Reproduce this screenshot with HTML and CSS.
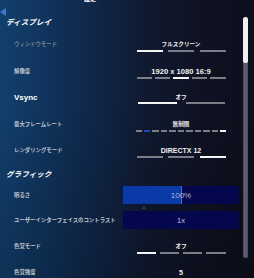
FILE: index.html
```html
<!DOCTYPE html>
<html lang="ja">
<head>
<meta charset="utf-8">
<title>設定</title>
<link rel="stylesheet" href="styles.css">
</head>
<body>
<div class="screen">
  <div class="main">
    <div class="topbar"><span class="tab">設定</span></div>
    <span class="back"></span>

    <section class="section">
      <h2 class="heading">ディスプレイ</h2>
      <div class="row">
        <span class="label label--dim">ウィンドウモード</span>
        <div class="control">
          <span class="value">フルスクリーン</span>
          <div class="bars bars--3"><span class="on"></span><span></span><span></span></div>
        </div>
      </div>
      <div class="row">
        <span class="label">解像度</span>
        <div class="control">
          <span class="value value--latin">1920 x 1080 16:9</span>
          <div class="bars bars--5"><span></span><span></span><span class="on"></span><span></span><span></span></div>
        </div>
      </div>
      <div class="row">
        <span class="label label--large">Vsync</span>
        <div class="control">
          <span class="value">オフ</span>
          <div class="bars bars--2"><span class="on"></span><span></span></div>
        </div>
      </div>
      <div class="row">
        <span class="label">最大フレームレート</span>
        <div class="control">
          <span class="value">無制限</span>
          <div class="bars bars--11"><span></span><span class="blue"></span><span></span><span></span><span></span><span></span><span></span><span></span><span></span><span></span><span class="on"></span></div>
        </div>
      </div>
      <div class="row row--end">
        <span class="label">レンダリングモード</span>
        <div class="control">
          <span class="value value--latin value--small">DIRECTX 12</span>
          <div class="bars bars--3"><span></span><span></span><span class="on"></span></div>
        </div>
      </div>
    </section>

    <section class="section section--graphics">
      <h2 class="heading">グラフィック</h2>
      <div class="row row--box">
        <span class="label">明るさ</span>
        <div class="box box--slider" style="--fill: 51%">100%<span class="box__marker"></span></div>
      </div>
      <div class="row row--box row--box-spaced">
        <span class="label">ユーザーインターフェイスのコントラスト</span>
        <div class="box box--small">1x</div>
      </div>
      <div class="row">
        <span class="label">色覚モード</span>
        <div class="control">
          <span class="value">オフ</span>
          <div class="bars bars--4"><span class="on"></span><span></span><span></span><span></span></div>
        </div>
      </div>
      <div class="row">
        <span class="label">色覚強度</span>
        <div class="control">
          <span class="value value--latin value--small">5</span>
        </div>
      </div>
    </section>
  </div>
  <div class="rail">
    <div class="track"><div class="thumb"></div></div>
  </div>
</div>
</body>
</html>
```

FILE: styles.css
```css
* {
  box-sizing: border-box;
  margin: 0;
  padding: 0;
}

html,
body {
  width: 254px;
  height: 278px;
  overflow: hidden;
}

body {
  font-family: "Noto Sans CJK JP", "Noto Sans", sans-serif;
  background: #0e0f1c;
}

.screen {
  display: flex;
  width: 254px;
  height: 278px;
  overflow: hidden;
  background:
    linear-gradient(180deg, rgba(0, 0, 0, 0) 35%, rgba(0, 0, 0, 0.2) 100%),
    linear-gradient(90deg, #123f6d 0%, #10365f 15%, #0f2648 38%, #10192f 58%, #0f1223 78%, #0e0f1d 100%);
}

.main {
  width: 239px;
  flex: none;
}

.topbar {
  height: 2px;
  overflow: hidden;
  padding-left: 84px;
}

.tab {
  display: block;
  font-size: 6px;
  line-height: 6px;
  margin-top: -4.5px;
  color: #ffffff;
  font-weight: 700;
}

.back {
  display: block;
  width: 0;
  height: 0;
  margin: 6px 0 1px;
  border-top: 4.5px solid transparent;
  border-bottom: 4.5px solid transparent;
  border-right: 6px solid #3a7ccc;
}

.heading {
  height: 10px;
  padding-left: 6px;
  margin-bottom: 13px;
  font-size: 7.6px;
  line-height: 10px;
  font-weight: 700;
  font-style: italic;
  color: #ffffff;
  white-space: nowrap;
}

.section--graphics .heading {
  margin-bottom: 7.5px;
}

.row {
  display: grid;
  grid-template-columns: 109px 116px;
  align-items: start;
  height: 26.5px;
  padding-left: 14px;
}

.row--end {
  height: 22.5px;
}

.row--box {
  height: 25px;
}

.row--box-spaced {
  height: 30.5px;
}

.label {
  font-size: 5.4px;
  line-height: 9px;
  font-weight: 700;
  color: #c0c5cf;
  white-space: nowrap;
}

.row--box .label {
  line-height: 18px;
}

.label--dim {
  color: #7a8392;
}

.label--large {
  font-family: "Liberation Sans", Arial, sans-serif;
  font-size: 8px;
  color: #ffffff;
}

.control {
  display: flex;
  flex-direction: column;
  align-items: center;
}

.value {
  font-size: 5.6px;
  line-height: 9px;
  font-weight: 700;
  color: #f0f0f2;
  white-space: nowrap;
}

.value--latin {
  font-family: "Liberation Sans", Arial, sans-serif;
  font-size: 7.6px;
}

.value--small {
  font-size: 7px;
}

.bars {
  display: flex;
  width: 89px;
  height: 2px;
  margin-top: 1px;
}

.bars span {
  flex: 1;
  background: #7b7d87;
}

.bars .on {
  background: #f5f5f7;
}

.bars .blue {
  background: #1d49b3;
}

.bars--3 {
  gap: 5.5px;
}

.bars--5 {
  gap: 3px;
}

.bars--2 {
  width: 87px;
  gap: 9px;
  margin-top: 0;
}

.bars--11 {
  width: 91px;
  gap: 2px;
}

.bars--4 {
  gap: 4px;
}

.box {
  position: relative;
  display: flex;
  align-items: center;
  justify-content: center;
  height: 18px;
  background: #05074e;
  color: #b3bbd2;
  font-family: "Liberation Sans", Arial, sans-serif;
  font-size: 8px;
}

.box--slider {
  background: linear-gradient(90deg,
    #0b39a8 calc(var(--fill) - 1px),
    #3e70d4 calc(var(--fill) - 1px),
    #3e70d4 var(--fill),
    #05074e var(--fill));
}

.box--small {
  font-size: 7.5px;
  color: #c4c8da;
}

.box__marker {
  position: absolute;
  left: 19px;
  bottom: -5px;
  width: 0;
  height: 0;
  border-left: 2.5px solid transparent;
  border-right: 2.5px solid transparent;
  border-bottom: 3px solid #3a3e53;
}

.rail {
  flex: none;
  width: 15px;
  padding-top: 17px;
  padding-left: 4px;
}

.track {
  width: 4.5px;
  height: 241px;
  border-radius: 2px;
  background: #5f5c72;
  box-shadow: inset 0 0 0 0.5px #3f3d4e;
  overflow: hidden;
}

.thumb {
  height: 46px;
  border-radius: 2px;
  background: #f0f0f4;
}
```
